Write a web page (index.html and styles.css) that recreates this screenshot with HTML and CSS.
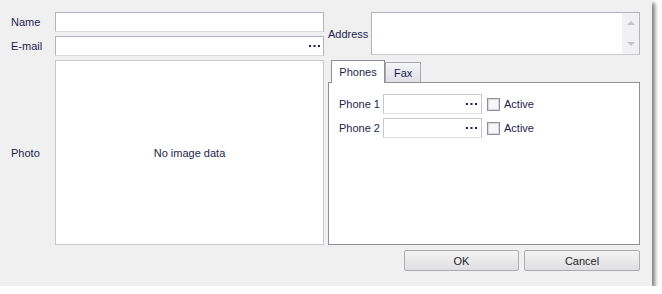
FILE: index.html
```html
<!DOCTYPE html>
<html lang="en">
  <head>
    <meta charset="UTF-8" />
    <title>Contact</title>
    <link rel="stylesheet" href="styles.css">
  </head>
  <body>
    <div class="window">
      <div class="form">
        <label class="lbl">Name</label>
        <div class="field"></div>

        <label class="lbl addr-lbl">Address</label>
        <div class="memo">
          <div class="memo-scroll">
            <span class="arrow up"></span>
            <span class="arrow down"></span>
          </div>
        </div>

        <label class="lbl">E-mail</label>
        <div class="field">
          <svg class="dots" width="11" height="2" viewBox="0 0 11 2"><rect x="0" y="0" width="2" height="2"/><rect x="4.5" y="0" width="2" height="2"/><rect x="9" y="0" width="2" height="2"/></svg>
        </div>

        <label class="lbl">Photo</label>
        <div class="photo">No image data</div>

        <div class="tabs">
          <div class="tab-strip">
            <div class="tab active">Phones</div>
            <div class="tab">Fax</div>
          </div>
          <div class="tab-panel">
            <div class="phone-row">
              <span class="phone-lbl">Phone 1</span>
              <div class="field phone-field">
                <svg class="dots" width="11" height="2" viewBox="0 0 11 2"><rect x="0" y="0" width="2" height="2"/><rect x="4.5" y="0" width="2" height="2"/><rect x="9" y="0" width="2" height="2"/></svg>
              </div>
              <span class="check"></span>
              <span class="check-lbl">Active</span>
            </div>
            <div class="phone-row">
              <span class="phone-lbl">Phone 2</span>
              <div class="field phone-field">
                <svg class="dots" width="11" height="2" viewBox="0 0 11 2"><rect x="0" y="0" width="2" height="2"/><rect x="4.5" y="0" width="2" height="2"/><rect x="9" y="0" width="2" height="2"/></svg>
              </div>
              <span class="check"></span>
              <span class="check-lbl">Active</span>
            </div>
          </div>
        </div>
      </div>

      <div class="buttons">
        <button class="btn btn-ok">OK</button>
        <button class="btn btn-cancel">Cancel</button>
      </div>
    </div>
  </body>
</html>
```

FILE: styles.css
```css
* {
  padding: 0;
  margin: 0;
  box-sizing: border-box;
  font-family: "Liberation Sans", Arial, sans-serif;
}

body {
  background-color: #ffffff;
}

/* janela do formulário */
.window {
  width: 652px;
  height: 286px;
  background-color: #f0f0f0;
  box-shadow: 3px 3px 4px rgba(0, 0, 0, 0.5);
  font-size: 11px;
  color: #1c1e4e;
}

.form {
  display: grid;
  grid-template-columns: 44px 269px 47px 269px;
  grid-template-rows: 20px 20px 185px;
  row-gap: 4px;
  padding: 12px 12px 0 11px;
}

.lbl {
  align-self: center;
}

.addr-lbl {
  grid-column: 3;
  grid-row: 1 / 3;
  padding-left: 4px;
}

/* campos de texto */
.field {
  height: 20px;
  background-color: #ffffff;
  border: 1px solid #b2b4bb;
  border-bottom-color: #dadbe0;
  display: flex;
  align-items: center;
  justify-content: flex-end;
  padding-right: 3px;
}

.dots {
  fill: #1c1e4e;
}

.memo {
  grid-column: 4;
  grid-row: 1 / 3;
  height: 43px;
  background-color: #ffffff;
  border: 1px solid #b2b4bb;
  border-bottom-color: #c9cad0;
  display: flex;
  justify-content: flex-end;
}

.memo-scroll {
  width: 17px;
  background-color: #f1f1f4;
  display: flex;
  flex-direction: column;
  justify-content: space-between;
  align-items: center;
  padding: 8px 0 8px;
}

.arrow {
  width: 0;
  height: 0;
  border-left: 4px solid transparent;
  border-right: 4px solid transparent;
}

.arrow.up {
  border-bottom: 4px solid #c4c5cc;
}

.arrow.down {
  border-top: 4px solid #c4c5cc;
}

.photo {
  background-color: #ffffff;
  border: 1px solid #c9c9cc;
  display: flex;
  align-items: center;
  justify-content: center;
}

/* abas */
.tabs {
  grid-column: 3 / 5;
  grid-row: 3;
  margin-left: 4px;
  display: flex;
  flex-direction: column;
}

.tab-strip {
  display: flex;
  align-items: flex-end;
  padding-left: 3px;
  height: 22px;
}

.tab {
  height: 20px;
  padding: 0 8px;
  border: 1px solid #a9aab2;
  border-bottom: none;
  background: linear-gradient(#f5f5f7, #dfe0e6);
  display: flex;
  align-items: center;
  justify-content: center;
}

.tab.active {
  width: 54px;
  height: 23px;
  margin-bottom: -1px;
  background: #ffffff;
  border-color: #8e8f97;
  position: relative;
  z-index: 1;
  padding-bottom: 1px;
}

.tab-panel {
  flex: 1;
  background-color: #ffffff;
  border: 1px solid #8e8f97;
  padding: 11px 0 0 10px;
  display: flex;
  flex-direction: column;
  gap: 4px;
}

.phone-row {
  display: flex;
  align-items: center;
  height: 20px;
}

.phone-lbl {
  width: 44px;
}

.phone-field {
  width: 99px;
  padding-right: 4px;
  border-color: #c6c8ce;
  border-bottom-color: #dcdde2;
}

.check {
  width: 13px;
  height: 13px;
  margin-left: 5px;
  border: 1px solid #8f9097;
  background-color: #f6f6f8;
  box-shadow: inset 0 0 0 1px #d8d9de;
}

.check-lbl {
  margin-left: 4px;
}

/* botões */
.buttons {
  display: flex;
  justify-content: flex-end;
  gap: 5px;
  padding-right: 12px;
  margin-top: 5px;
}

.btn {
  height: 21px;
  border: 1px solid #acacb0;
  border-radius: 2px;
  background: linear-gradient(#f3f3f3, #e0e0e2);
  font-size: 11px;
  color: #1e1e2a;
}

.btn-ok {
  width: 115px;
}

.btn-cancel {
  width: 116px;
}
```
